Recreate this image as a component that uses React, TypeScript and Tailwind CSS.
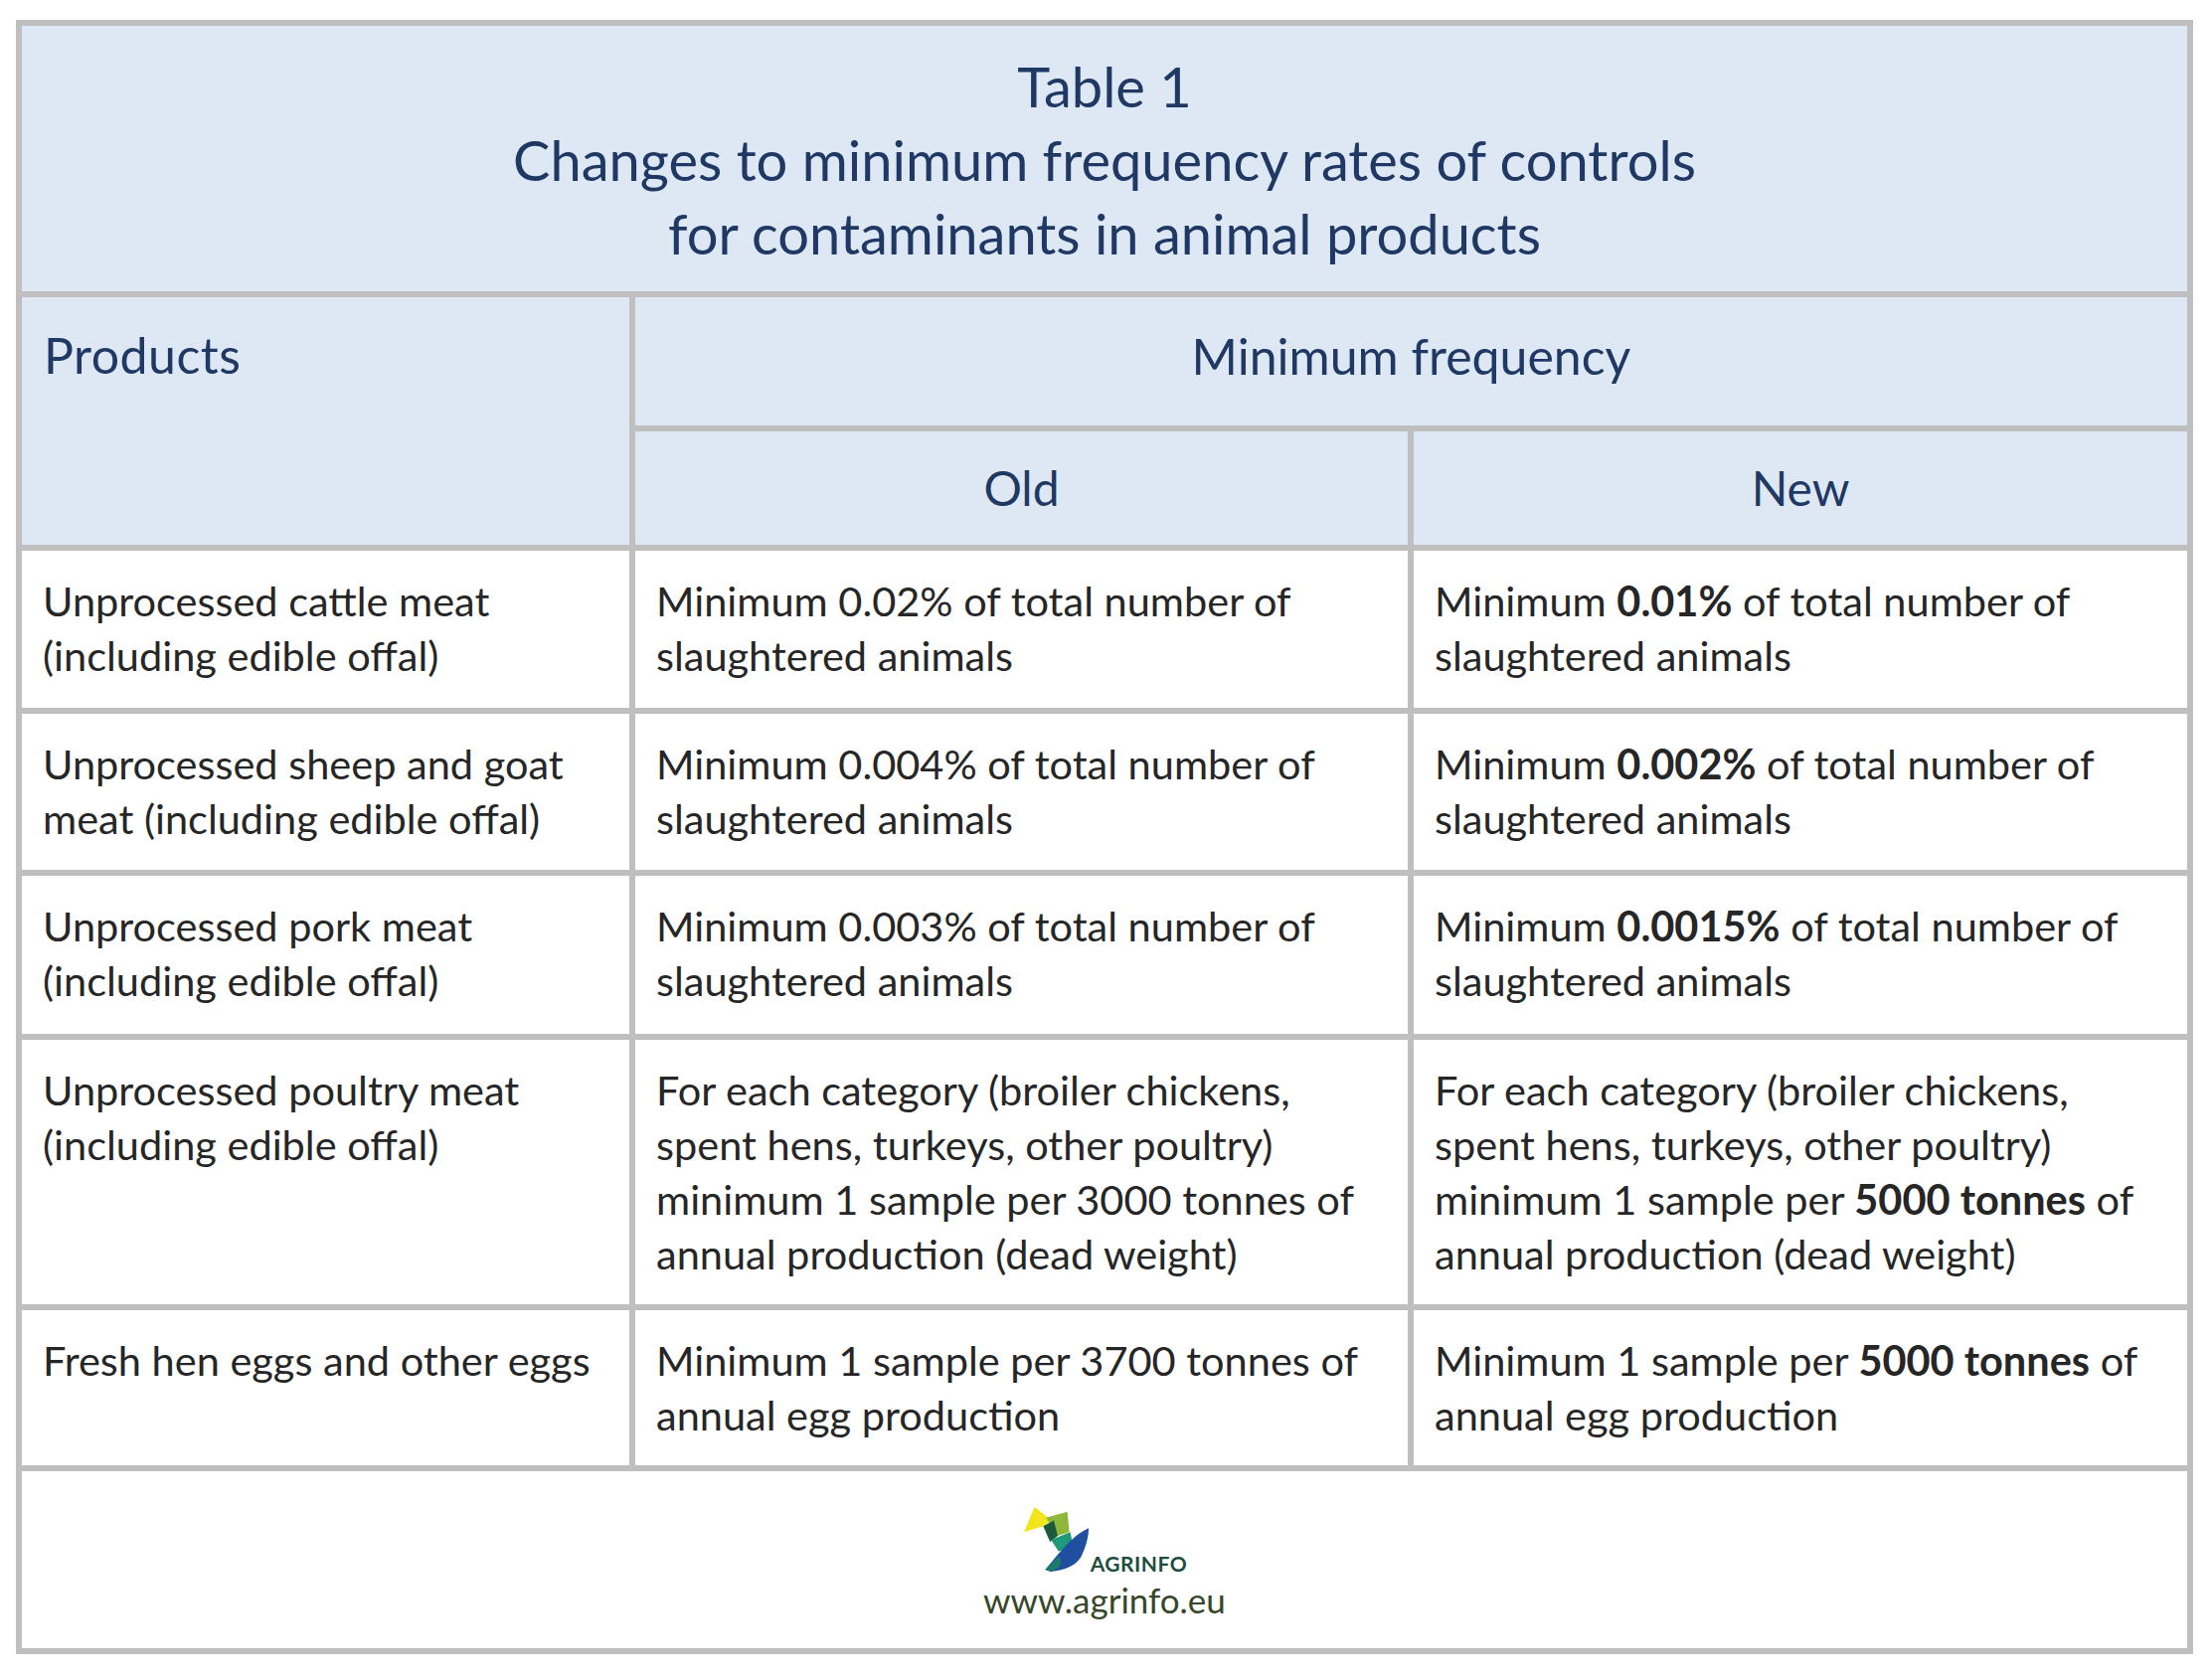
import React from "react";

type Row = {
  product: React.ReactNode;
  old: React.ReactNode;
  next: React.ReactNode;
};

const rows: Row[] = [
  {
    product: (
      <>
        Unprocessed cattle meat
        <br />
        (including edible offal)
      </>
    ),
    old: (
      <>
        Minimum 0.02% of total number of
        <br />
        slaughtered animals
      </>
    ),
    next: (
      <>
        Minimum <b className="font-bold">0.01%</b> of total number of
        <br />
        slaughtered animals
      </>
    ),
  },
  {
    product: (
      <>
        Unprocessed sheep and goat
        <br />
        meat (including edible offal)
      </>
    ),
    old: (
      <>
        Minimum 0.004% of total number of
        <br />
        slaughtered animals
      </>
    ),
    next: (
      <>
        Minimum <b className="font-bold">0.002%</b> of total number of
        <br />
        slaughtered animals
      </>
    ),
  },
  {
    product: (
      <>
        Unprocessed pork meat
        <br />
        (including edible offal)
      </>
    ),
    old: (
      <>
        Minimum 0.003% of total number of
        <br />
        slaughtered animals
      </>
    ),
    next: (
      <>
        Minimum <b className="font-bold">0.0015%</b> of total number of
        <br />
        slaughtered animals
      </>
    ),
  },
  {
    product: (
      <>
        Unprocessed poultry meat
        <br />
        (including edible offal)
      </>
    ),
    old: (
      <>
        For each category (broiler chickens,
        <br />
        spent hens, turkeys, other poultry)
        <br />
        minimum 1 sample per 3000 tonnes of
        <br />
        annual production (dead weight)
      </>
    ),
    next: (
      <>
        For each category (broiler chickens,
        <br />
        spent hens, turkeys, other poultry)
        <br />
        minimum 1 sample per <b className="font-bold">5000 tonnes</b> of
        <br />
        annual production (dead weight)
      </>
    ),
  },
  {
    product: <>Fresh hen eggs and other eggs</>,
    old: (
      <>
        Minimum 1 sample per 3700 tonnes of
        <br />
        annual egg production
      </>
    ),
    next: (
      <>
        Minimum 1 sample per <b className="font-bold">5000 tonnes</b> of
        <br />
        annual egg production
      </>
    ),
  },
];

const AgrinfoMark = () => (
  <svg width="68" height="72" viewBox="0 0 70 70" className="shrink-0">
    <polygon points="2,28 13,2 31,16 22,22" fill="#f2e51c" />
    <polygon points="25,13 47,7 49,28 37,32" fill="#8fb83a" />
    <polygon points="22,22 33,16 37,32 29,38" fill="#1d5a3a" />
    <polygon points="30,36 50,28 53,42 38,48" fill="#1f9a78" />
    <path
      d="M24 67 C 33 57, 40 46, 56 32 C 61 28, 65 26, 69 24 C 69 32, 67 42, 61 54 C 55 63, 45 67, 30 69 Z"
      fill="#1f4f9e"
    />
    <path d="M24 67 C 29 62, 33 58, 38 53 C 43 60, 41 64, 30 69 Z" fill="#1c7a6a" />
  </svg>
);

export default function App() {
  const head = "bg-[#dde8f4] text-[#1f3864]";
  const cell = "bg-white pl-[21px] pt-[23px] text-[41.5px] leading-[55px] text-[#262626] whitespace-nowrap";

  return (
    <div className="min-h-screen bg-white font-['Lato','Liberation_Sans',sans-serif]">
      <div className="ml-[16px] mt-[20px] grid w-[2190px] grid-cols-[611px_777px_778px] grid-rows-[267px_129px_114px_158px_157px_159px_266px_156px_178px] gap-[6px] bg-[#bfbfbf] p-[6px]">
        <div className={`${head} col-span-3 flex flex-col items-center justify-center pt-[3px] text-[56px] leading-[74px]`}>
          <div>Table 1</div>
          <div>Changes to minimum frequency rates of controls</div>
          <div>for contaminants in animal products</div>
        </div>

        <div className={`${head} row-span-2 pl-[22px] pt-[28px] text-[50px] leading-[60px] tracking-[0.5px]`}>
          Products
        </div>
        <div className={`${head} col-span-2 flex items-center justify-center pb-[11px] text-[50px]`}>
          Minimum frequency
        </div>
        <div className={`${head} flex items-center justify-center text-[48px]`}>Old</div>
        <div className={`${head} flex items-center justify-center text-[48px]`}>New</div>

        {rows.map((r, i) => (
          <React.Fragment key={i}>
            <div className={cell}>{r.product}</div>
            <div className={cell}>{r.old}</div>
            <div className={cell}>{r.next}</div>
          </React.Fragment>
        ))}

        <div className="col-span-3 flex flex-col items-center justify-center bg-white pt-[2px]">
          <div className="flex items-end">
            <AgrinfoMark />
            <span className="mb-[1px] ml-[1px] text-[21px] leading-[20px] font-bold tracking-[0.5px] text-[#1d4d3c]">
              AGRINFO
            </span>
          </div>
          <div className="mt-[6px] text-[35px] leading-[38px] text-[#36472a]">www.agrinfo.eu</div>
        </div>
      </div>
    </div>
  );
}
